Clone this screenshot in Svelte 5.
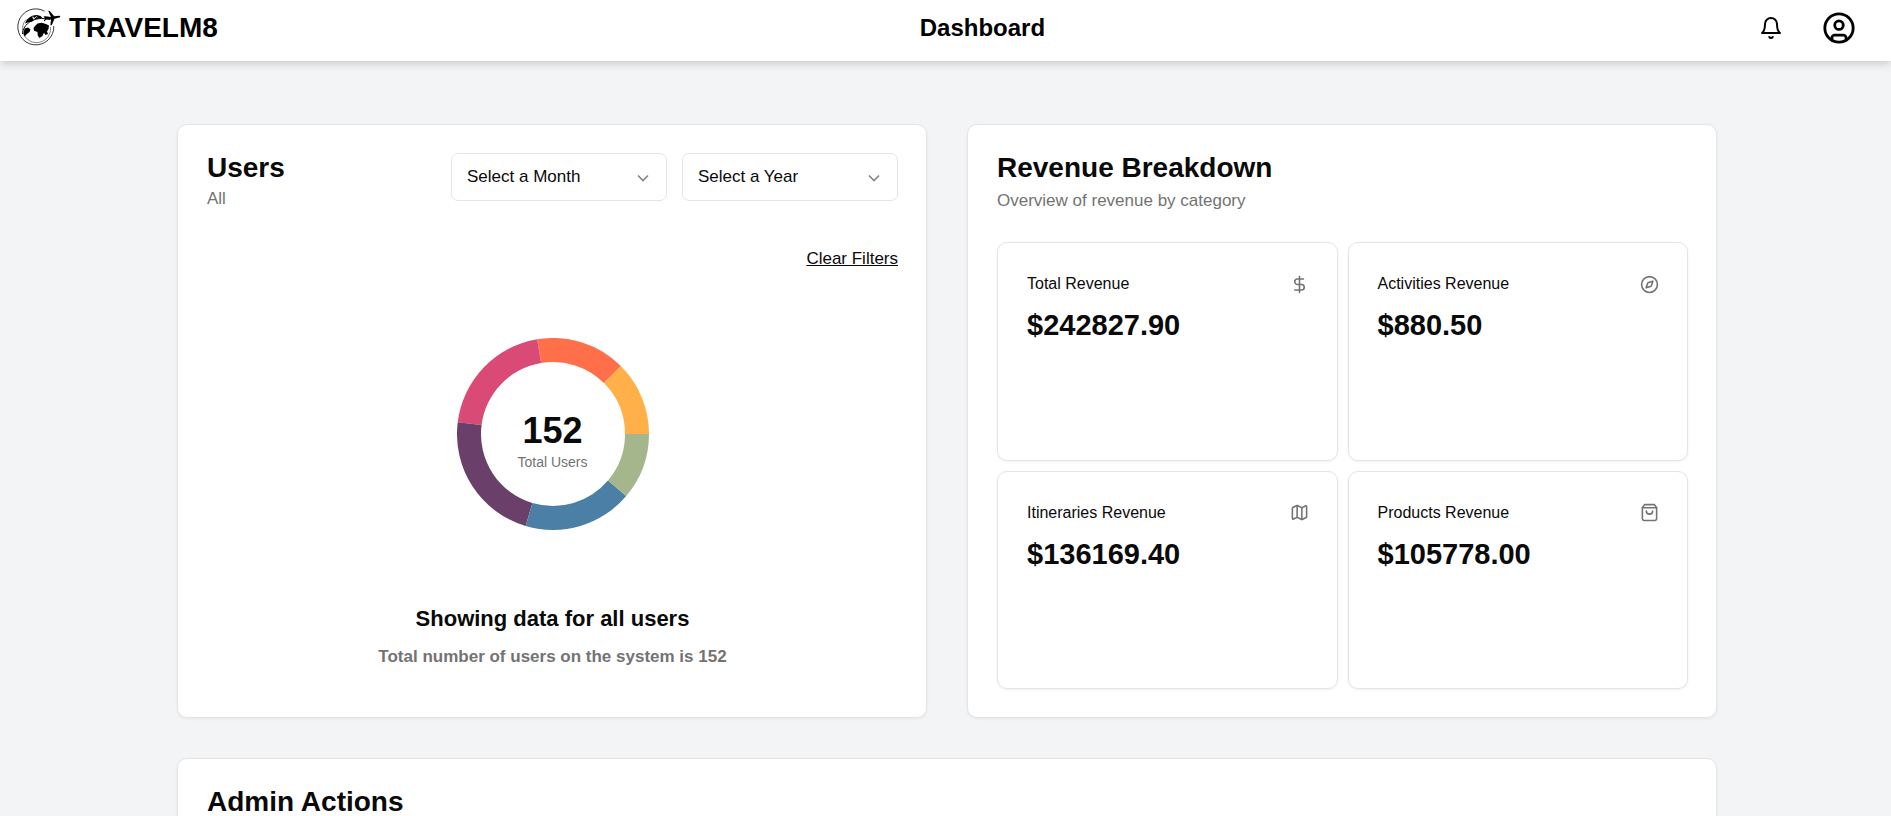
<script>
  const months = ['January', 'February', 'March', 'April', 'May', 'June', 'July', 'August', 'September', 'October', 'November', 'December'];
  const years = [2022, 2023, 2024];

  let month = $state('');
  let year = $state('');

  const groups = [
    { count: 19, color: '#ffb048' },
    { count: 23, color: '#ff6f49' },
    { count: 31, color: '#d94a76' },
    { count: 34, color: '#6a3f69' },
    { count: 28, color: '#4c7fa5' },
    { count: 17, color: '#a6b68c' },
  ];
  const total = groups.reduce((sum, g) => sum + g.count, 0);

  // Slices run counter-clockwise from three o'clock.
  function ring(outer, inner) {
    let seen = 0;
    const at = (r, a) => `${(96 + r * Math.cos(a)).toFixed(3)} ${(96 - r * Math.sin(a)).toFixed(3)}`;
    return groups.map((g) => {
      const a = (seen / total) * 2 * Math.PI;
      seen += g.count;
      const b = (seen / total) * 2 * Math.PI;
      return {
        color: g.color,
        d: `M${at(outer, a)}A${outer} ${outer} 0 0 0 ${at(outer, b)}L${at(inner, b)}A${inner} ${inner} 0 0 1 ${at(inner, a)}Z`,
      };
    });
  }
  const slices = ring(96, 72);

  const revenue = [
    { label: 'Total Revenue', value: '$242827.90', icon: 'dollar' },
    { label: 'Activities Revenue', value: '$880.50', icon: 'compass' },
    { label: 'Itineraries Revenue', value: '$136169.40', icon: 'map' },
    { label: 'Products Revenue', value: '$105778.00', icon: 'bag' },
  ];

  function clearFilters() {
    month = '';
    year = '';
  }
</script>

{#snippet chevron()}
  <svg class="chevron" viewBox="0 0 24 24" aria-hidden="true"><path d="m6 9 6 6 6-6" /></svg>
{/snippet}

<div class="page">
  <header class="topbar">
    <a class="brand" href="#home">
      <svg class="logo" viewBox="0 0 44 40" aria-hidden="true">
        <path d="M27.5 3.1A18 18 0 1 0 36.8 18" fill="none" stroke="#222" stroke-width=".9" />
        <path d="M9 11.5A14 14 0 1 0 33.5 19" fill="none" stroke="#555" stroke-width=".7" />
        <path d="M5.5 26C6 16 17 7.5 33 11.5" fill="none" stroke="#111" stroke-width="1" />
        <path d="M8 15.5 10 11.5 13 9 16 7.5 20 7 23.5 8 25.5 10 21.5 10.6 17.5 11.5 15 13.7 11.5 14.2Z" />
        <path d="m15 9 2 .5-1 1.5 2-.7 1-1.6M19.5 8.2l.7 1.3" fill="none" stroke="#fff" stroke-width=".8" />
        <path d="M7.5 20.5 11 19.5 13.5 21.5 12.5 24 10 26 7.5 28.5 6.5 25.5Z" />
        <path d="M18 18 20.5 15.5 24.5 14.7 29 16 32 17.5 31.5 21 30 23.5 31 26 28.5 27 27 24.7 25.5 28 22.5 30 20.7 27.5 20.5 24 17 22.7 16.5 20Z" />
        <path d="M28.5 8.2 34 8.9 31.2 2.8 32.7 2.9 37.2 8.3 42 7.8C43.3 7.7 43.8 9 42.5 9.5L37.5 10.8 34.7 17.2 33.4 17.3 34 11.4 29.5 11.2 27.5 13.2 26.8 13 28 10.5 26.5 8.5Z" />
      </svg>
      <span>TRAVELM8</span>
    </a>
    <h1>Dashboard</h1>
    <div class="actions">
      <button class="bell" aria-label="Notifications">
        <svg viewBox="0 0 24 24" aria-hidden="true">
          <path d="M6 8a6 6 0 0 1 12 0c0 7 3 9 3 9H3s3-2 3-9" />
          <path d="M10.3 21a1.94 1.94 0 0 0 3.4 0" />
        </svg>
      </button>
      <button class="account" aria-label="Account">
        <svg viewBox="0 0 24 24" aria-hidden="true">
          <circle cx="12" cy="12" r="10" />
          <circle cx="12" cy="10" r="3" />
          <path d="M7 20.662V19a2 2 0 0 1 2-2h6a2 2 0 0 1 2 2v1.662" />
        </svg>
      </button>
    </div>
  </header>

  <main>
    <div class="content">
      <section class="card users">
        <div class="card-head">
          <div class="titles">
            <h2>Users</h2>
            <p class="muted">All</p>
          </div>
          <div class="filters">
            <div class="select">
              <select aria-label="Month" bind:value={month}>
                <option value="">Select a Month</option>
                {#each months as m}<option value={m}>{m}</option>{/each}
              </select>
              {@render chevron()}
            </div>
            <div class="select">
              <select aria-label="Year" bind:value={year}>
                <option value="">Select a Year</option>
                {#each years as y}<option value={String(y)}>{y}</option>{/each}
              </select>
              {@render chevron()}
            </div>
          </div>
        </div>
        <button class="clear" onclick={clearFilters}>Clear Filters</button>
        <div class="chart">
          <svg viewBox="0 0 192 192" aria-hidden="true">
            {#each slices as s}<path d={s.d} fill={s.color} />{/each}
          </svg>
          <div class="total">
            <strong>{total}</strong>
            <span>Total Users</span>
          </div>
        </div>
        <div class="summary">
          <p class="lead">Showing data for all users</p>
          <p class="detail">Total number of users on the system is {total}</p>
        </div>
      </section>

      <section class="card revenue">
        <div class="titles">
          <h2>Revenue Breakdown</h2>
          <p class="muted">Overview of revenue by category</p>
        </div>
        <div class="tiles">
          {#each revenue as item}
            <article class="card tile">
              <div class="tile-head">
                <h3>{item.label}</h3>
                <svg viewBox="0 0 24 24" aria-hidden="true">
                  {#if item.icon === 'dollar'}
                    <path d="M12 2v20" />
                    <path d="M17 5H9.5a3.5 3.5 0 0 0 0 7h5a3.5 3.5 0 0 1 0 7H6" />
                  {:else if item.icon === 'compass'}
                    <path d="m16.24 7.76-1.804 5.411a2 2 0 0 1-1.265 1.265L7.76 16.24l1.804-5.411a2 2 0 0 1 1.265-1.265z" />
                    <circle cx="12" cy="12" r="10" />
                  {:else if item.icon === 'map'}
                    <path d="M14.106 5.553a2 2 0 0 0 1.788 0l3.659-1.83A1 1 0 0 1 21 4.619v12.764a1 1 0 0 1-.553.894l-4.553 2.277a2 2 0 0 1-1.788 0l-4.212-2.106a2 2 0 0 0-1.788 0l-3.659 1.83A1 1 0 0 1 3 19.381V6.618a1 1 0 0 1 .553-.894l4.553-2.277a2 2 0 0 1 1.788 0z" />
                    <path d="M15 5.764v15" />
                    <path d="M9 3.236v15" />
                  {:else}
                    <path d="M6 2 3 6v14a2 2 0 0 0 2 2h14a2 2 0 0 0 2-2V6l-3-4Z" />
                    <path d="M3 6h18" />
                    <path d="M16 10a4 4 0 0 1-8 0" />
                  {/if}
                </svg>
              </div>
              <p class="value">{item.value}</p>
            </article>
          {/each}
        </div>
      </section>

      <section class="card admin">
        <h2>Admin Actions</h2>
      </section>
    </div>
  </main>
</div>

<style>
  :global(body) {
    background: #f3f4f6;
  }
  .page {
    min-height: 100vh;
    font-family: 'Liberation Sans', Arial, sans-serif;
    font-size: 17px;
    line-height: 24px;
    color: #0a0a0a;
  }
  .page * {
    box-sizing: border-box;
  }
  h1, h2, h3, p {
    margin: 0;
  }
  button {
    padding: 0;
    border: 0;
    background: none;
    font: inherit;
    color: inherit;
    cursor: pointer;
  }

  .topbar {
    position: relative;
    display: flex;
    align-items: center;
    justify-content: space-between;
    padding: 4px 35px 9px 17px;
    background: #fff;
    color: #000;
    box-shadow: 0 4px 8px -1px rgba(0, 0, 0, 0.17);
  }
  .brand {
    display: flex;
    align-items: center;
    gap: 8px;
    color: inherit;
    font-size: 28px;
    font-weight: 700;
    text-decoration: none;
  }
  .logo {
    width: 44px;
    height: 40px;
  }
  h1 {
    font-size: 24px;
    line-height: 28px;
  }
  .actions {
    display: flex;
    align-items: center;
    gap: 27px;
  }
  .actions button {
    display: flex;
    align-items: center;
    justify-content: center;
    height: 48px;
  }
  .actions svg {
    fill: none;
    stroke: currentColor;
    stroke-width: 2;
    stroke-linecap: round;
    stroke-linejoin: round;
  }
  .bell {
    width: 48px;
  }
  .bell svg {
    width: 24px;
    height: 24px;
  }
  .account svg {
    width: 34px;
    height: 34px;
  }

  main {
    padding: 63px 24px 40px 27px;
  }
  .content {
    display: grid;
    grid-template-columns: 1fr 1fr;
    gap: 40px;
    max-width: 1540px;
    margin: 0 auto;
  }
  .card {
    padding: 28px 28px 28px 29px;
    border: 1px solid #e5e5e5;
    border-radius: 10px;
    background: #fff;
    box-shadow: 0 1px 3px rgba(0, 0, 0, 0.06);
  }
  h2 {
    font-size: 28px;
    line-height: 30px;
  }
  .muted {
    color: #737373;
  }
  .titles {
    display: flex;
    flex-direction: column;
    gap: 4px;
  }

  .users {
    display: flex;
    flex-direction: column;
    padding-bottom: 48px;
  }
  .card-head {
    display: flex;
    justify-content: space-between;
    min-height: 64px;
  }
  .filters {
    display: flex;
    gap: 15px;
  }
  .select {
    position: relative;
  }
  select {
    display: block;
    width: 216px;
    height: 48px;
    padding: 0 40px 0 15px;
    border: 1px solid #e5e5e5;
    border-radius: 7px;
    background: #fff;
    font: inherit;
    color: inherit;
    appearance: none;
  }
  .chevron {
    position: absolute;
    top: 15px;
    right: 14px;
    width: 20px;
    height: 20px;
    fill: none;
    stroke: #858585;
    stroke-width: 2;
    pointer-events: none;
  }
  .clear {
    align-self: flex-end;
    margin-top: 30px;
    text-decoration: underline;
  }
  .chart {
    display: grid;
    place-items: center;
    padding: 67px 0 78px;
  }
  .chart > * {
    grid-area: 1 / 1;
  }
  .chart svg {
    width: 192px;
    height: 192px;
  }
  .total {
    display: flex;
    flex-direction: column;
    align-items: center;
    gap: 3px;
    padding-top: 16px;
  }
  .total strong {
    font-size: 36px;
    line-height: 36px;
  }
  .total span {
    font-size: 14px;
    line-height: 20px;
    color: #737373;
  }
  .summary {
    display: flex;
    flex-direction: column;
    gap: 15px;
    text-align: center;
    font-weight: 700;
  }
  .lead {
    font-size: 22px;
    line-height: 22px;
  }
  .detail {
    color: #737373;
  }

  .revenue {
    display: flex;
    flex-direction: column;
    gap: 29px;
  }
  .revenue .titles {
    gap: 6px;
  }
  .tiles {
    flex: 1;
    display: grid;
    grid-template-columns: 1fr 1fr;
    grid-auto-rows: 1fr;
    gap: 10px;
  }
  .tile {
    display: flex;
    flex-direction: column;
    gap: 12px;
    padding-top: 29px;
  }
  .tile-head {
    display: flex;
    align-items: center;
    justify-content: space-between;
  }
  h3 {
    font-size: 16px;
    font-weight: 400;
  }
  .tile svg {
    width: 19px;
    height: 19px;
    fill: none;
    stroke: #737373;
    stroke-width: 2;
    stroke-linecap: round;
    stroke-linejoin: round;
  }
  .value {
    font-size: 29px;
    line-height: 35px;
    font-weight: 700;
  }

  .admin {
    grid-column: 1 / -1;
    min-height: 160px;
  }
</style>
